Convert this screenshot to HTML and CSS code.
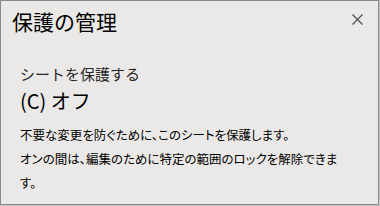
FILE: index.html
```html
<!DOCTYPE html>
<html lang="ja">
<head>
<meta charset="utf-8">
<link rel="stylesheet" href="styles.css">
</head>
<body>
<div class="panel">
  <div class="header">
    <h1 class="title">保護の管理</h1>
    <button class="close" aria-label="閉じる">
      <svg width="11" height="11" viewBox="0 0 11 11"><path d="M0.5 0.5 L10.5 10.5 M10.5 0.5 L0.5 10.5" stroke="#555" stroke-width="1.4" fill="none"/></svg>
    </button>
  </div>
  <div class="section">
    <div class="label">シートを保護する</div>
    <div class="state">(C) オフ</div>
    <p class="desc">不要な変更を防ぐために、このシートを保護します。<br>オンの間は、編集のために特定の範囲のロックを解除できます。</p>
  </div>
</div>
</body>
</html>
```
FILE: styles.css
```css
html, body {
  margin: 0;
  padding: 0;
  background: #c4c4c4;
}
.panel {
  box-sizing: border-box;
  width: 379px;
  height: 205px;
  border: 1px solid #8a8a8a;
  background: #ebe9e7;
  font-family: "Noto Sans CJK JP", "Noto Sans", sans-serif;
  color: #000;
  overflow: hidden;
}
.header {
  display: flex;
  align-items: center;
  justify-content: space-between;
  height: 40px;
  padding: 0 15px 0 11px;
}
.title {
  margin: 0;
  font-size: 21px;
  font-weight: normal;
  line-height: 28px;
}
.close {
  border: 0;
  background: none;
  padding: 0;
  width: 11px;
  height: 11px;
  display: flex;
  margin-top: -4px;
}
.section {
  padding: 23px 12px 0 19px;
}
.label {
  font-size: 15px;
  line-height: 20px;
  color: #262626;
}
.state {
  margin-top: 3px;
  font-size: 20px;
  line-height: 28px;
}
.desc {
  margin: 8px 0 0;
  font-size: 12.5px;
  line-height: 24px;
  font-feature-settings: "palt";
  width: 325px;
}
```
